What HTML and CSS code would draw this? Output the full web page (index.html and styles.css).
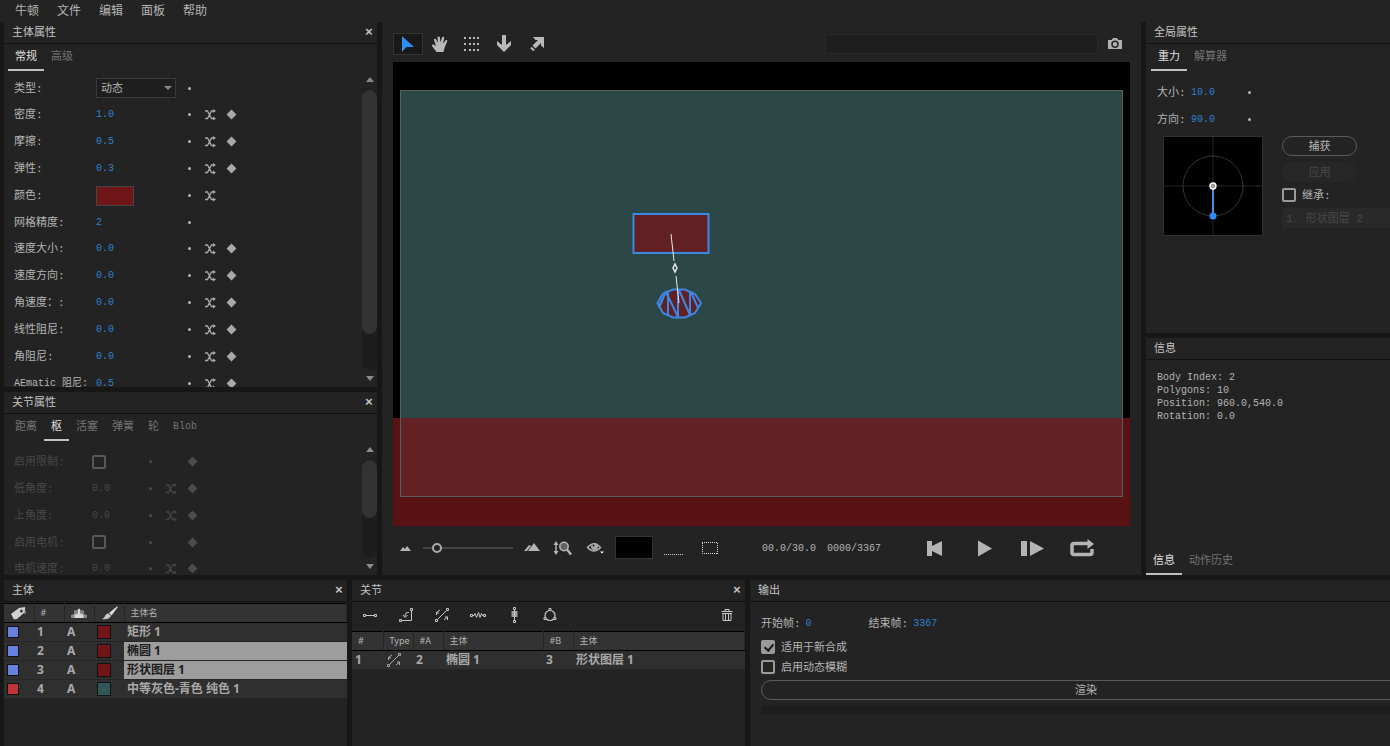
FILE: index.html
```html
<!DOCTYPE html>
<html lang="zh-CN">
<head>
  <meta charset="UTF-8" />
  <meta name="viewport" content="width=device-width, initial-scale=1" />
  <title>牛顿</title>
  <link rel="stylesheet" href="styles.css">
</head>
<body>

<svg class="hidden" aria-hidden="true">
  <symbol id="shuffle" viewBox="0 0 12 12">
    <path d="M1 2h2.500l4 7.500h2M1 9.500h2.500l4-7.500h2" fill="none" stroke="currentColor" stroke-width="1.300"/>
    <path d="M9 0 12 2 9 4zM9 7.500 12 9.500 9 11.500z" fill="currentColor"/>
  </symbol>
  <symbol id="pivot" viewBox="0 0 16 16">
    <path d="M3.500 12.500 12.500 3.500M2.500 8V5M2.500 5.500 6 3M2 6h3M10 13l3.500-3M11 10h2.500v3" fill="none" stroke="currentColor"/>
    <path d="M1.500 12.500h2v2h-2zM12.500 1.500h2v2h-2z" fill="none" stroke="currentColor"/>
  </symbol>
</svg>

<nav class="menu">
  <button>牛顿</button>
  <button>文件</button>
  <button>编辑</button>
  <button>面板</button>
  <button>帮助</button>
</nav>

<main class="workspace">
  <div class="column">
    <!-- Body properties -->
    <section class="panel grow">
      <header class="panel-head"><h2>主体属性</h2><button class="close" aria-label="关闭">×</button></header>
      <div class="tabs">
        <button class="tab active">常规</button>
        <button class="tab">高级</button>
      </div>
      <div class="scroll-area">
        <div class="props">
          <div class="row short">
            <label for="type">类型:</label>
            <span class="select-box"><select id="type"><option>动态</option></select></span>
            <i class="dot"></i>
          </div>
          <div class="row">
            <label for="density">密度:</label><input class="num" id="density" value="1.0">
            <i class="dot"></i><svg class="shuffle"><use href="#shuffle"/></svg><i class="key"></i>
          </div>
          <div class="row">
            <label for="friction">摩擦:</label><input class="num" id="friction" value="0.5">
            <i class="dot"></i><svg class="shuffle"><use href="#shuffle"/></svg><i class="key"></i>
          </div>
          <div class="row">
            <label for="bounce">弹性:</label><input class="num" id="bounce" value="0.3">
            <i class="dot"></i><svg class="shuffle"><use href="#shuffle"/></svg><i class="key"></i>
          </div>
          <div class="row">
            <label for="color">颜色:</label><button class="color" id="color" aria-label="颜色"></button>
            <i class="dot"></i><svg class="shuffle"><use href="#shuffle"/></svg>
          </div>
          <div class="row short">
            <label for="mesh">网格精度:</label><input class="num" id="mesh" value="2">
            <i class="dot"></i>
          </div>
          <div class="row">
            <label for="velocity">速度大小:</label><input class="num" id="velocity" value="0.0">
            <i class="dot"></i><svg class="shuffle"><use href="#shuffle"/></svg><i class="key"></i>
          </div>
          <div class="row">
            <label for="direction">速度方向:</label><input class="num" id="direction" value="0.0">
            <i class="dot"></i><svg class="shuffle"><use href="#shuffle"/></svg><i class="key"></i>
          </div>
          <div class="row">
            <label for="angular">角速度：:</label><input class="num" id="angular" value="0.0">
            <i class="dot"></i><svg class="shuffle"><use href="#shuffle"/></svg><i class="key"></i>
          </div>
          <div class="row">
            <label for="linear-damp">线性阻尼:</label><input class="num" id="linear-damp" value="0.0">
            <i class="dot"></i><svg class="shuffle"><use href="#shuffle"/></svg><i class="key"></i>
          </div>
          <div class="row">
            <label for="angular-damp">角阻尼:</label><input class="num" id="angular-damp" value="0.0">
            <i class="dot"></i><svg class="shuffle"><use href="#shuffle"/></svg><i class="key"></i>
          </div>
          <div class="row">
            <label for="ae-damp" class="latin">AEmatic 阻尼:</label><input class="num" id="ae-damp" value="0.5">
            <i class="dot"></i><svg class="shuffle"><use href="#shuffle"/></svg><i class="key"></i>
          </div>
        </div>
        <div class="scrollbar">
          <button class="arrow up" aria-label="向上"></button>
          <div class="track"><div class="thumb long"></div></div>
          <button class="arrow down" aria-label="向下"></button>
        </div>
      </div>
    </section>

    <!-- Joint properties -->
    <section class="panel joint-props">
      <header class="panel-head"><h2>关节属性</h2><button class="close" aria-label="关闭">×</button></header>
      <div class="tabs">
        <button class="tab">距离</button>
        <button class="tab active">枢</button>
        <button class="tab">活塞</button>
        <button class="tab">弹簧</button>
        <button class="tab">轮</button>
        <button class="tab latin">Blob</button>
      </div>
      <div class="scroll-area">
        <div class="props off">
          <div class="row">
            <label for="limit">启用限制:</label><span class="cell"><input type="checkbox" id="limit" disabled></span>
            <i class="dot"></i><span class="shuffle"></span><i class="key"></i>
          </div>
          <div class="row">
            <label for="low">低角度:</label><input class="num" id="low" value="0.0" disabled>
            <i class="dot"></i><svg class="shuffle"><use href="#shuffle"/></svg><i class="key"></i>
          </div>
          <div class="row">
            <label for="high">上角度:</label><input class="num" id="high" value="0.0" disabled>
            <i class="dot"></i><svg class="shuffle"><use href="#shuffle"/></svg><i class="key"></i>
          </div>
          <div class="row short">
            <label for="motor">启用电机:</label><span class="cell"><input type="checkbox" id="motor" disabled></span>
            <i class="dot"></i><span class="shuffle"></span><i class="key"></i>
          </div>
          <div class="row">
            <label for="motor-speed">电机速度:</label><input class="num" id="motor-speed" value="0.0" disabled>
            <i class="dot"></i><svg class="shuffle"><use href="#shuffle"/></svg><i class="key"></i>
          </div>
        </div>
        <div class="scrollbar">
          <button class="arrow up" aria-label="向上"></button>
          <div class="track"><div class="thumb"></div></div>
          <button class="arrow down" aria-label="向下"></button>
        </div>
      </div>
    </section>
  </div>

  <!-- Preview -->
  <section class="panel preview">
    <div class="toolbar">
      <button class="tool selected" aria-label="选择">
        <svg width="20" height="20" viewBox="0 0 20 20"><path d="M4 2v16l4.500-5H16z" fill="#2f8cf5"/></svg>
      </button>
      <button class="tool" aria-label="手形">
        <svg width="20" height="20" viewBox="0 0 20 20"><path d="M6.500 18 2 12c-.8-1.200.5-2.200 1.700-1.200L6 12 4 6c-.3-1.500 1.700-1.800 2.200-.5L8 9 7.500 3.500c0-1.500 2.200-1.500 2.400 0L10.500 8.500 12 3.500c.5-1.400 2.500-.9 2.200.6L13 9.500 15.500 6.500c.8-1 2.300-.2 1.700 1L15 12.500 13.500 18z" fill="#b9b9b9"/></svg>
      </button>
      <button class="tool" aria-label="网格">
        <svg width="20" height="20" viewBox="0 0 20 20" shape-rendering="crispEdges"><path d="M2 4h2M7 4h2M11 4h2M15 4h2M2 10h2M7 10h2M11 10h2M15 10h2M2 16h2M7 16h2M11 16h2M15 16h2" stroke="#b9b9b9" stroke-width="2"/></svg>
      </button>
      <button class="tool" aria-label="重力">
        <svg width="20" height="20" viewBox="0 0 20 20"><path d="M8 1h4v10l5-4v4l-7 7-7-7V7l5 4z" fill="#b9b9b9"/></svg>
      </button>
      <button class="tool" aria-label="导出">
        <svg width="20" height="20" viewBox="0 0 20 20"><path d="M7 3h11v11l-3-2.500V9l-5.500 5.500-3-3L12 6h-2.500z" fill="#b9b9b9"/><path d="M5 13.500l3 3" stroke="#b9b9b9" stroke-width="2"/></svg>
      </button>
      <input class="search" type="text" aria-label="状态">
      <button class="tool camera" aria-label="快照">
        <svg width="16" height="12" viewBox="0 0 16 12"><path d="M1 2h3.500L6 0h4l1.500 2H15v9H1z" fill="#b0b0b0"/><circle cx="8" cy="6.300" r="3" fill="#b0b0b0" stroke="#232323" stroke-width="1.500"/></svg>
      </button>
    </div>

    <svg class="stage" viewBox="0 0 737 464">
      <rect width="737" height="464" fill="#000"/>
      <rect x="8" y="29" width="721" height="406" fill="#2b4847"/>
      <rect y="356" width="737" height="108" fill="#581214"/>
      <path d="M736 356v107H0" fill="none" stroke="#601014" stroke-width="2"/>
      <rect x="8" y="356" width="721" height="79" fill="#622224"/>
      <rect x="7.500" y="28.500" width="722" height="406" fill="none" stroke="#566060"/>
      <rect x="240.500" y="152" width="75" height="39" fill="#612123" stroke="#3a87e6" stroke-width="2"/>
      <!-- ellipse body, split into its polygons -->
      <path d="M264.500 241 270 231.500 280 227.500 292 227.500 302 232 308 241 302 251 292 255.500 280 255.500 270 251z" fill="#612123" stroke="#3a87e6" stroke-width="2"/>
      <path d="M266 244 273 230 285 255M275 230V254M285 255V228M286 228 297 253V230M266 246 271 234M298 230 305 246" fill="none" stroke="#3a87e6" stroke-width="2"/>
      <path d="M278 172l3 27M283 214l3 27" stroke="#e8e8e8"/>
      <path d="M282 202l2 4-2 4-2-4z" fill="#2b4847" stroke="#e8e8e8" stroke-width="1.500"/>
    </svg>

    <div class="controls">
      <svg width="22" height="16" viewBox="0 0 22 16"><path d="M7 11 10 7l2 2 2-3 4 5z" fill="#b4b4b4"/></svg>
      <input class="zoom" type="range" min="0" max="100" value="11" aria-label="缩放">
      <svg width="22" height="16" viewBox="0 0 22 16"><path d="M3 11 8 5l2 1-4 5zM7 11l6-8 6 8z" fill="#b4b4b4"/></svg>
      <button class="control" aria-label="适合窗口">
        <svg width="22" height="18" viewBox="0 0 22 18"><path d="M5 5v8" stroke="#b4b4b4" stroke-width="1.500"/><path d="M2.500 6 5 2l2.500 4zM2.500 12 5 16l2.500-4z" fill="#b4b4b4"/><circle cx="13" cy="7.500" r="4.200" fill="#626262" stroke="#b4b4b4" stroke-width="1.500"/><path d="M16 10.500l4 5" stroke="#b4b4b4" stroke-width="2.500"/></svg>
      </button>
      <button class="control" aria-label="显示">
        <svg width="26" height="18" viewBox="0 0 26 18"><path d="M6.500 8.500Q13 1 19.500 8.500Q13 15.500 6.500 8.500z" fill="none" stroke="#a8a8a8" stroke-width="1.500"/><circle cx="13.500" cy="7.500" r="3.500" fill="#a8a8a8"/><circle cx="12.500" cy="6.500" r="1" fill="#232323"/><path d="M19 12.500h4l-2 2z" fill="#fff"/></svg>
      </button>
      <button class="backdrop" aria-label="背景色"></button>
      <svg width="26" height="18" viewBox="0 0 26 18" shape-rendering="crispEdges"><path d="M3 15.500h20" stroke="#ccc" stroke-dasharray="1 1"/></svg>
      <svg width="26" height="18" viewBox="0 0 26 18" shape-rendering="crispEdges"><path d="M7 3.500h16M7 14.500h16M7.500 4v11M22.500 4v11" fill="none" stroke="#ddd" stroke-dasharray="1 1"/></svg>
      <div class="time"><span>00.0/30.0</span><span>0000/3367</span></div>
      <div class="transport">
        <button class="control" aria-label="回到开头"><svg width="24" height="18" viewBox="0 0 24 18"><path d="M4 2h5v5l10-5v15l-10-5v5H4z" fill="#b4b4b4"/></svg></button>
        <button class="control" aria-label="播放"><svg width="24" height="18" viewBox="0 0 24 18"><path d="M6 1.500v16L20 9.500z" fill="#b4b4b4"/></svg></button>
        <button class="control" aria-label="逐帧"><svg width="24" height="18" viewBox="0 0 24 18"><path d="M0 2h6v15H0zM9 2v15l14-7.500z" fill="#b4b4b4"/></svg></button>
        <button class="control" aria-label="循环"><svg width="24" height="18" viewBox="0 0 24 18"><path d="M18 4.500H4q-2 0-2 2v7q0 2 2 2h16q2 0 2-2V10" fill="none" stroke="#b4b4b4" stroke-width="3.500"/><path d="M17.500 0 24 5l-6.500 5z" fill="#b4b4b4"/></svg></button>
      </div>
    </div>
  </section>

  <div class="column">
    <!-- Global properties -->
    <section class="panel grow">
      <header class="panel-head"><h2>全局属性</h2></header>
      <div class="tabs world-tabs">
        <button class="tab active">重力</button>
        <button class="tab">解算器</button>
      </div>
      <div class="world">
        <div class="row"><label for="magnitude">大小:</label><input class="num" id="magnitude" value="10.0"><i class="dot"></i></div>
        <div class="row"><label for="heading">方向:</label><input class="num" id="heading" value="90.0"><i class="dot"></i></div>
        <div class="gravity">
          <svg class="dial" width="100" height="100" viewBox="0 0 100 100">
            <rect x="0.500" y="0.500" width="99" height="99" fill="#000" stroke="#303030"/>
            <path d="M50 1v98M1 50h98" stroke="#262626"/>
            <circle cx="50" cy="50" r="30" fill="none" stroke="#333"/>
            <path d="M50 50v30" stroke="#4a90d9" stroke-width="2"/>
            <circle cx="50" cy="80" r="3.500" fill="#2f8cf5"/>
            <circle cx="50" cy="50" r="3" fill="#999" stroke="#fff" stroke-width="1.300"/>
          </svg>
          <div class="gravity-side">
            <button class="pill">捕获</button>
            <button class="pill" disabled>应用</button>
            <div class="check"><input type="checkbox" id="inherit"><label for="inherit">继承:</label></div>
            <select class="inherit-from" aria-label="继承图层" disabled><option>1. 形状图层 2</option></select>
          </div>
        </div>
      </div>
    </section>

    <!-- Info -->
    <section class="panel info">
      <header class="panel-head"><h2>信息</h2></header>
      <div class="info-text">
        <p>Body Index: 2</p>
        <p>Polygons: 10</p>
        <p>Position: 960.0,540.0</p>
        <p>Rotation: 0.0</p>
      </div>
      <div class="tabs info-tabs">
        <button class="tab active">信息</button>
        <button class="tab">动作历史</button>
      </div>
    </section>
  </div>
</main>

<div class="bottom">
  <!-- Bodies -->
  <section class="panel">
    <header class="panel-head"><h2>主体</h2><button class="close" aria-label="关闭">×</button></header>
    <table class="list bodies">
      <colgroup><col class="c30"><col class="c30"><col class="c30"><col class="c30"><col></colgroup>
      <thead>
        <tr>
          <th aria-label="标签"><svg width="18" height="16" viewBox="0 0 18 16"><path d="M1 9 9 3l6-1v5l-8 7-3 .5z" fill="#d2d2d2"/><circle cx="11.500" cy="6" r="1.500" fill="#333"/><path d="M12 6q4-2 3 3" fill="none" stroke="#aaa"/></svg></th>
          <th>#</th>
          <th aria-label="分组"><svg width="16" height="16" viewBox="0 0 16 16"><path d="M0 13v-3l3-1V6q1.500-2 3 0v3h4V6q1.500-2 3 0v3l3 1v3z" fill="#888"/><path d="M3.500 13v-3l3-1.500V5q1.500-3 3 0v3.500l3 1.500v3z" fill="#d8d8d8"/></svg></th>
          <th aria-label="颜色"><svg width="18" height="16" viewBox="0 0 18 16"><path d="M16.500 1 8 8l2.500 2.500 6-8z" fill="#ddd"/><path d="M7.500 8.500 10 11Q7.500 15 1 14 3.500 13 4 11 5 8 7.500 8.500z" fill="#c8c8c8"/></svg></th>
          <th>主体名</th>
        </tr>
      </thead>
      <tbody>
        <tr><td><i class="tag blue"></i></td><td>1</td><td>A</td><td><i class="chip"></i></td><td>矩形 1</td></tr>
        <tr class="picked"><td><i class="tag blue"></i></td><td>2</td><td>A</td><td><i class="chip"></i></td><td>椭圆 1</td></tr>
        <tr class="picked"><td><i class="tag blue"></i></td><td>3</td><td>A</td><td><i class="chip"></i></td><td>形状图层 1</td></tr>
        <tr><td><i class="tag red"></i></td><td>4</td><td>A</td><td><i class="chip teal"></i></td><td>中等灰色-青色 纯色 1</td></tr>
      </tbody>
    </table>
  </section>

  <!-- Joints -->
  <section class="panel">
    <header class="panel-head"><h2>关节</h2><button class="close" aria-label="关闭">×</button></header>
    <div class="joint-tools">
      <button aria-label="距离"><svg width="16" height="16" viewBox="0 0 16 16"><path d="M1.500 7.500h2v2h-2zM12.500 7.500h2v2h-2zM4 8.500h8" fill="none" stroke="currentColor"/></svg></button>
      <button aria-label="枢"><svg width="16" height="16" viewBox="0 0 16 16"><path d="M1.500 12.500h2v2h-2zM12.500 1.500h2v2h-2zM4 13.500h9.500V4M11 5.500q-4-1-4 4M5 8l2 2.500L9.500 8" fill="none" stroke="currentColor"/></svg></button>
      <button aria-label="活塞"><svg width="16" height="16"><use href="#pivot"/></svg></button>
      <button aria-label="弹簧"><svg width="18" height="16" viewBox="0 0 18 16"><path d="M1.500 7.500h2v2h-2zM14.500 7.500h2v2h-2zM4 8.500h1l1-2 1.500 4 2-5 1.500 5 1.500-4 1 2h1" fill="none" stroke="currentColor"/></svg></button>
      <button aria-label="轮"><svg width="16" height="16" viewBox="0 0 16 16"><path d="M7.500 0.500h2v2h-2zM7.500 13.500h2v2h-2zM8.500 3v10" fill="none" stroke="currentColor"/><path d="M5.500 5h6M5.500 7h6M5.500 9h6" stroke="currentColor" stroke-width="1.500"/></svg></button>
      <button aria-label="Blob"><svg width="16" height="16" viewBox="0 0 16 16"><circle cx="8" cy="8.500" r="5" fill="none" stroke="currentColor" stroke-width="1.200"/><path d="M7 1.500h2v2H7zM2 10.500h2v2H2zM12 10.500h2v2h-2z" fill="#232323" stroke="currentColor"/></svg></button>
      <button class="trash" aria-label="删除"><svg width="12" height="14" viewBox="0 0 12 14"><path d="M0.500 3.500h11M4 3V1.500h4V3" fill="none" stroke="currentColor"/><path d="M1 5.500h10M2 5.500v7h8v-7M4.500 5.500v7M7.500 5.500v7" fill="none" stroke="currentColor"/></svg></button>
    </div>
    <table class="list joints">
      <colgroup><col class="c31"><col class="c30"><col class="c30"><col class="c100"><col class="c30"><col></colgroup>
      <thead>
        <tr><th>#</th><th>Type</th><th>#A</th><th>主体</th><th>#B</th><th>主体</th></tr>
      </thead>
      <tbody>
        <tr><td>1</td><td><svg width="16" height="16"><use href="#pivot"/></svg></td><td>2</td><td>椭圆 1</td><td>3</td><td>形状图层 1</td></tr>
      </tbody>
    </table>
  </section>

  <!-- Output -->
  <section class="panel">
    <header class="panel-head"><h2>输出</h2></header>
    <div class="output">
      <div class="frames">
        <label for="start">开始帧:</label><input class="num" id="start" value="0">
        <label for="end">结束帧:</label><input class="num" id="end" value="3367">
      </div>
      <div class="check"><input type="checkbox" id="new-comp" checked><label for="new-comp">适用于新合成</label></div>
      <div class="check"><input type="checkbox" id="blur"><label for="blur">启用动态模糊</label></div>
      <button class="pill render">渲染</button>
      <div class="progress"></div>
    </div>
  </section>
</div>

</body>
</html>
```

FILE: styles.css
```css
* {
  box-sizing: border-box;
}

body {
  margin: 0;
  height: 100vh;
  display: flex;
  flex-direction: column;
  overflow: hidden;
  background: #171717;
  color: #b4b4b4;
  font-family: "Liberation Mono", "Noto Sans CJK SC", monospace;
  font-size: 11px;
  line-height: 14px;
}

button, input, select {
  margin: 0;
  padding: 0;
  border: none;
  border-radius: 0;
  background: none;
  color: inherit;
  font: inherit;
  appearance: none;
  outline: none;
}

h2, p {
  margin: 0;
  font-size: inherit;
  font-weight: normal;
}

svg {
  display: block;
}

.hidden {
  display: none;
}

/* menu */
.menu {
  display: flex;
  gap: 18px;
  height: 22px;
  padding: 2px 0 0 15px;
  background: #232323;
  font-size: 12px;
}

/* panels */
.workspace {
  flex: 1;
  min-height: 0;
  display: grid;
  grid-template-columns: 373px minmax(0, 1fr) 244px;
  gap: 5px;
  padding-left: 4px;
}

.column {
  display: flex;
  flex-direction: column;
  gap: 5px;
  min-height: 0;
}

.bottom {
  display: grid;
  grid-template-columns: 343px 393px minmax(0, 1fr);
  gap: 5px;
  height: 171px;
  padding: 5px 0 0 4px;
}

.panel {
  display: flex;
  flex-direction: column;
  min-width: 0;
  min-height: 0;
  overflow: hidden;
  background: #232323;
}

.grow {
  flex: 1;
}

.joint-props {
  height: 183px;
}

.info {
  height: 237px;
}

.panel-head {
  display: flex;
  flex: none;
  justify-content: space-between;
  align-items: center;
  height: 22px;
  padding: 0 3px 0 8px;
  border-bottom: 1px solid #111;
  color: #c4c4c4;
}

.close {
  width: 10px;
  font-size: 13px;
  font-weight: bold;
}

.tabs {
  display: flex;
  flex: none;
  height: 27px;
  padding-left: 4px;
}

.tab {
  padding: 0 7px;
  border-bottom: 2px solid transparent;
  color: #747474;
}

.tab.active {
  border-color: #c0c0c0;
  color: #e0e0e0;
}

.latin {
  font-size: 10px;
}

/* property rows */
.scroll-area {
  flex: 1;
  min-height: 0;
  display: flex;
  justify-content: space-between;
}

.props {
  padding: 4px 0 0 10px;
  overflow: hidden;
  flex: 1;
}

.row {
  display: grid;
  grid-template-columns: 82px 92px 16px 22px 10px;
  align-items: center;
  height: 27px;
  white-space: nowrap;
}

.row.short {
  height: 26px;
}

.row label,
.check label,
.frames label {
  padding-top: 1px;
}

.num {
  width: 40px;
  height: 16px;
  color: #2f80cf;
  font-size: 10px;
}

.dot {
  width: 3px;
  height: 3px;
  border-radius: 50%;
  background: #b4b4b4;
}

.shuffle {
  width: 12px;
  height: 12px;
  color: #a8a8a8;
  overflow: visible;
}

.key {
  width: 7px;
  height: 7px;
  margin-left: 2px;
  background: #a8a8a8;
  transform: rotate(45deg);
}

.color {
  width: 38px;
  height: 20px;
  border: 1px solid #444;
  background: #701518;
}

.select-box {
  position: relative;
  width: 80px;
}

.select-box select {
  display: block;
  width: 80px;
  height: 20px;
  padding: 1px 0 0 4px;
  border: 1px solid #3a3a3a;
  background: #1e1e1e;
}

.select-box::after {
  content: "";
  position: absolute;
  top: 8px;
  right: 4px;
  border: 4px solid transparent;
  border-top-color: #888;
  border-bottom: none;
}

.off {
  padding-top: 7px;
}

.off .row {
  grid-template-columns: 78px 57px 16px 22px 10px;
}

.off label,
.off .num {
  color: #484848;
}

.off .dot,
.off .key {
  background: #4c4c4c;
}

.off svg.shuffle {
  color: #444;
}

/* scrollbars */
.scrollbar {
  display: flex;
  flex-direction: column;
  width: 15px;
}

.arrow {
  display: flex;
  flex: none;
  justify-content: center;
  align-items: center;
  height: 17px;
}

.arrow::before {
  content: "";
  border: 4px solid transparent;
}

.arrow.up::before {
  border-bottom: 5px solid #8a8a8a;
  border-top: none;
}

.arrow.down::before {
  border-top: 5px solid #8a8a8a;
  border-bottom: none;
}

.track {
  flex: 1;
  min-height: 0;
  padding-top: 2px;
  border-radius: 8px;
  background: #1d1d1d;
}

.thumb {
  height: 58px;
  border-radius: 8px;
  background: #333;
}

.thumb.long {
  height: 244px;
}

/* checkboxes */
input[type="checkbox"] {
  display: block;
  flex: none;
  position: relative;
  width: 14px;
  height: 14px;
  border: 2px solid #9a9a9a;
  border-radius: 2px;
}

input[type="checkbox"]:disabled {
  border-color: #585858;
}

input[type="checkbox"]:checked {
  background: #9a9a9a;
}

input[type="checkbox"]:checked::after {
  content: "";
  position: absolute;
  top: 0;
  left: 3px;
  width: 4px;
  height: 7px;
  border: solid #1c1c1c;
  border-width: 0 2px 2px 0;
  transform: rotate(40deg);
}

.check {
  display: flex;
  align-items: center;
  gap: 6px;
  height: 20px;
}

/* preview */
.preview {
  padding: 0 11px 6px;
}

.toolbar {
  display: flex;
  flex: none;
  align-items: center;
  height: 40px;
  padding-top: 4px;
  gap: 2px;
}

.tool {
  display: flex;
  justify-content: center;
  align-items: center;
  width: 30px;
  height: 22px;
}

.tool.selected {
  border: 1px solid #333;
  background: #191919;
}

.search {
  width: 273px;
  height: 20px;
  margin-left: auto;
  border: 1px solid #292929;
  border-radius: 3px;
  background: #1e1e1e;
}

.stage {
  flex: 1;
  min-height: 0;
  width: 100%;
}

.controls {
  display: flex;
  flex: none;
  align-items: center;
  gap: 8px;
  height: 43px;
}

.zoom {
  width: 90px;
  height: 12px;
}

.zoom::-webkit-slider-runnable-track {
  height: 2px;
  background: #444;
}

.zoom::-webkit-slider-thumb {
  appearance: none;
  width: 10px;
  height: 10px;
  margin-top: -4px;
  border: 2px solid #aaa;
  border-radius: 50%;
  background: #232323;
}

.backdrop {
  width: 38px;
  height: 23px;
  border: 1px solid #333;
  background: #000;
}

.time {
  display: flex;
  gap: 11px;
  margin-left: 33px;
  padding-top: 2px;
  font-size: 10px;
}

.transport {
  display: flex;
  gap: 25px;
  margin-left: auto;
  padding-right: 36px;
}

/* gravity */
.world-tabs {
  padding-left: 5px;
}

.world {
  padding: 8px 0 0 11px;
}

.world .row {
  grid-template-columns: 34px 57px 14px;
}

.gravity {
  display: flex;
  gap: 19px;
  padding: 3px 0 0 6px;
}

.dial {
  flex: none;
}

.gravity-side {
  flex: 1;
}

.pill {
  display: block;
  width: 75px;
  height: 20px;
  padding-top: 2px;
  border: 1px solid #5a5a5a;
  border-radius: 10px;
  line-height: 16px;
}

.pill:disabled {
  margin: 6px 0 3px;
  border-color: #272727;
  background: #272727;
  color: #484848;
}

.inherit-from {
  display: block;
  width: 100%;
  height: 20px;
  margin-top: 3px;
  padding: 1px 0 0 4px;
  background: #292929;
  color: #484848;
  opacity: 1;
}

/* info */
.info-text {
  flex: 1;
  padding: 11px;
  font-size: 10px;
  line-height: 13px;
}

.info-tabs {
  padding-left: 0;
}

/* tables */
.list {
  width: 100%;
  table-layout: fixed;
  border-collapse: collapse;
}

.c30 {
  width: 30px;
}

.c31 {
  width: 31px;
}

.c100 {
  width: 100px;
}

.list th,
.list td {
  height: 19px;
  padding: 0 3px;
  text-align: left;
  white-space: nowrap;
  vertical-align: middle;
}

.list th {
  padding: 0 6px;
  border-top: 1px solid #000;
  border-bottom: 1px solid #000;
  border-right: 1px solid #262626;
  background: #333;
  font: 9px/14px "Noto Sans", "Noto Sans CJK SC", sans-serif;
}

.list td {
  border-bottom: 1px solid #262626;
  background: #2f2f2f;
  color: #a8a8a8;
  font: bold 12px/16px "Noto Sans", "Noto Sans CJK SC", sans-serif;
}

.bodies {
  margin-top: 1px;
}

.joints td {
  padding: 0 3px;
}

.picked td:last-child {
  background: #9d9d9d;
  color: #1c1c1c;
}

.tag,
.chip {
  display: block;
  width: 12px;
  height: 12px;
  border: 1px solid #111;
}

.tag.blue {
  background: #6880e0;
}

.tag.red {
  background: #be3439;
}

.chip {
  width: 14px;
  height: 14px;
  background: #701518;
}

.chip.teal {
  background: #315758;
}

.joint-tools {
  display: flex;
  align-items: center;
  height: 29px;
  padding: 0 12px 3px 0;
  color: #c8c8c8;
}

.joint-tools button {
  display: flex;
  justify-content: center;
  width: 36px;
}

.joint-tools .trash {
  width: 12px;
  margin-left: auto;
}

/* output */
.output {
  padding: 11px 0 0 11px;
}

.frames {
  display: flex;
  align-items: center;
  gap: 5px;
  height: 20px;
  margin-bottom: 4px;
}

.frames .num {
  width: 58px;
}

.render {
  width: calc(100% + 21px);
  margin: 3px 0 6px;
}

.progress {
  height: 8px;
  border-radius: 4px 0 0 4px;
  background: #1d1d1d;
}
```
